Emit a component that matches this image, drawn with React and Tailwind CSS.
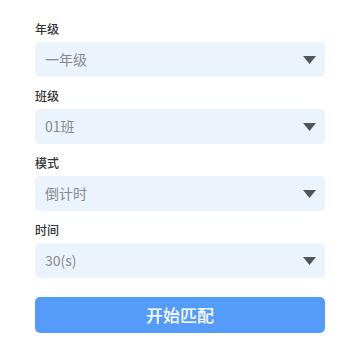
const fields = [
  { label: '年级', value: '一年级' },
  { label: '班级', value: '01班' },
  { label: '模式', value: '倒计时' },
  { label: '时间', value: '30(s)' },
];

const Select = ({ value }) => (
  <div className="flex h-[35px] items-center justify-between rounded-[5px] bg-[#ebf3fd] pl-[10px] pr-[9px]">
    <span className="text-[14px] text-[#8a8a8a]">{value}</span>
    <svg width="13" height="8" viewBox="0 0 13 8">
      <polygon points="0,0 13,0 6.5,8" fill="#555555" />
    </svg>
  </div>
);

const App = () => {
  return (
    <div
      className="h-[360px] w-[360px] bg-white px-[35px] pt-[20px]"
      style={{ fontFamily: '"Noto Sans CJK SC", "Noto Sans", sans-serif' }}
    >
      {fields.map((f, i) => (
        <div key={f.label} className={i > 0 ? 'mt-[10px]' : ''}>
          <div className="h-[18px] text-[12px] font-medium leading-[18px] text-[#333333]">{f.label}</div>
          <div className="mt-[4px]">
            <Select value={f.value} />
          </div>
        </div>
      ))}
      <button className="mt-[19px] flex h-[36px] w-full items-center justify-center rounded-[5px] bg-[#559bfa] text-[17px] font-medium text-white">
        开始匹配
      </button>
    </div>
  );
};

export default App;
